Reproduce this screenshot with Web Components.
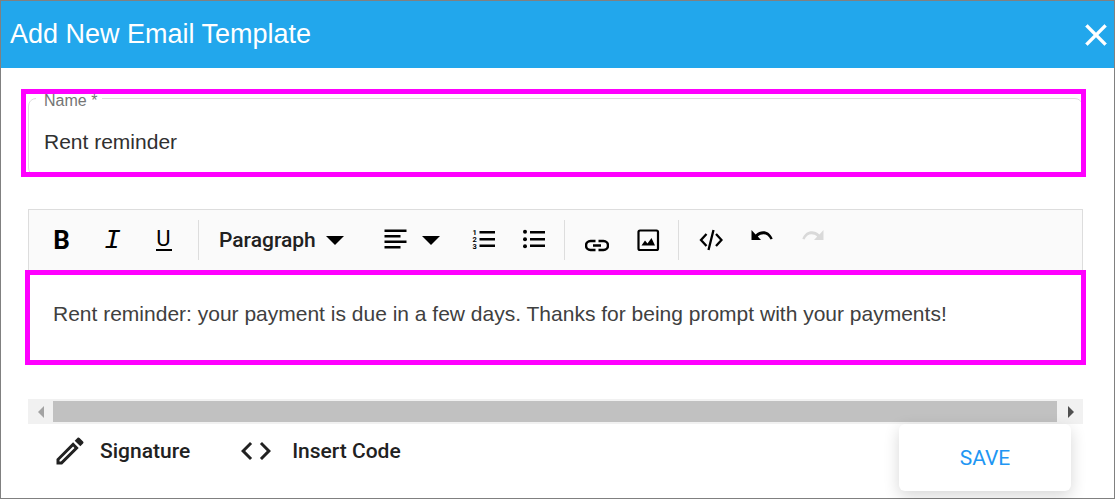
<!DOCTYPE html>
<html lang="en">
<head>
<meta charset="utf-8">
<meta name="viewport" content="width=device-width, initial-scale=1">
<title>Add New Email Template</title>
<style>
    body { margin: 0; font-family: "Liberation Sans", Arial, sans-serif; color: #212121; background: #fff; }
</style>
</head>
<body>
<template-dialog heading="Add New Email Template">
    <highlight-box class="name">
        <outlined-field label="Name *" value="Rent reminder"></outlined-field>
    </highlight-box>
    <editor-toolbar></editor-toolbar>
    <highlight-box class="message">
        <message-editor>Rent reminder: your payment is due in a few days. Thanks for being prompt with your payments!</message-editor>
    </highlight-box>
    <scroll-track></scroll-track>
    <dialog-actions slot="footer"></dialog-actions>
</template-dialog>

<script>
const ICONS = {
    close: '<path stroke="currentColor" stroke-width=".4" d="M19 6.41 17.59 5 12 10.59 6.41 5 5 6.41 10.59 12 5 17.59 6.41 19 12 13.41 17.59 19 19 17.59 13.41 12z"/>',
    alignLeft: '<path d="M.5 1.500h22V4H.5zM.5 7h16v2.500H.5zM.5 12.500h22V15H.5zM.5 18h16v2.500H.5z"/>',
    ordered: '<path d="M8.500 3H24v2.500H8.500zM8.500 10H24v2.500H8.500zM8.500 16.500H24V19H8.500z"/><g font-family="Roboto, sans-serif" font-size="7.500" font-weight="700"><text x="1.500" y="6.500">1</text><text x="1.500" y="13.500">2</text><text x="1.500" y="20.500">3</text></g>',
    bullets: '<path d="M8 3h15v2.500H8zM8 10h15v2.500H8zM8 16.500h15V19H8z"/><circle cx="3" cy="3.800" r="2"/><circle cx="3" cy="11.200" r="2"/><circle cx="3" cy="18.300" r="2"/>',
    link: '<path d="M10.500 13H5.500a4.500 4.500 0 0 0 0 9h5M13.500 13h5a4.500 4.500 0 0 1 0 9h-5M8 17.500h8" fill="none" stroke="currentColor" stroke-width="2.500"/>',
    image: '<rect x="2.500" y="2.500" width="19.500" height="19.500" rx="1.500" fill="none" stroke="currentColor" stroke-width="2.200"/><path d="M5.500 17.500 9 12.500l2.500 3L15.500 10l3.500 7.500z"/>',
    source: '<path d="m7.500 6-5.500 6 5.500 6M17 6l5.500 6-5.500 6M14.500 2l-5 20" fill="none" stroke="currentColor" stroke-width="2.300"/>',
    undo: '<path d="M1.500 2v10h9.500L7.800 8.600C12 4.800 18 5.500 20.500 11.500l2.200-.8C19.500 2.500 11.500 1 5.600 6.500z"/>',
    redo: '<path d="M22.500 2v10H13l3.200-3.400C12 4.800 6 5.500 3.500 11.500l-2.200-.8C4.500 2.500 12.500 1 18.400 6.500z"/>',
    pencil: '<path d="m14.060 9.020.92.92L5.920 19H5v-.92l9.060-9.060M17.660 3c-.25 0-.51.1-.7.290l-1.830 1.830 3.750 3.750 1.830-1.830a1 1 0 0 0 0-1.410l-2.340-2.340A1 1 0 0 0 17.660 3zm-3.600 3.190L3 17.250V21h3.750L17.810 9.940z"/>',
    code: '<path d="M9.400 16.600 4.800 12l4.600-4.600L8 6l-6 6 6 6zm5.200 0 4.600-4.600-4.600-4.600L16 6l6 6-6 6z"/>'
};

const caret = '<svg class="caret" viewBox="0 0 18 9" aria-hidden="true"><path d="M0 0h18L9 9z"/></svg>';

function icon(name) {
    return `<svg class="icon" viewBox="0 0 24 24" aria-hidden="true">${ICONS[name]}</svg>`;
}

const base = `
    * { box-sizing: border-box; }
    svg { display: block; fill: currentColor; flex: none; }
    button { font: inherit; color: inherit; background: none; border: 0; padding: 0; margin: 0; cursor: pointer; }
`;

class TemplateDialog extends HTMLElement {
    constructor() {
        super();
        this.attachShadow({ mode: 'open' });
    }

    connectedCallback() {
        this.shadowRoot.innerHTML = `
            <style>
                ${base}
                :host { display: flex; flex-direction: column; box-sizing: border-box; min-height: 100vh; border: 1px solid #808080; }
                header { display: flex; align-items: center; justify-content: space-between; height: 67px; padding-left: 9px; background: #22a7ec; color: #fff; }
                h1 { margin: 0; padding-bottom: 2px; font-size: 27px; font-weight: 400; line-height: 32px; }
                .icon { width: 36px; height: 36px; }
                main { padding: 21px 31px 0 27px; }
                ::slotted(.name) { margin: 0 -3px 32px -7px; }
                ::slotted(.message) { margin: 0 -3px 34px; }
            </style>
            <header>
                <h1>${this.getAttribute('heading')}</h1>
                <button type="button" aria-label="Close">${icon('close')}</button>
            </header>
            <main><slot></slot></main>
            <slot name="footer"></slot>
        `;
    }
}
customElements.define('template-dialog', TemplateDialog);

class HighlightBox extends HTMLElement {
    constructor() {
        super();
        this.attachShadow({ mode: 'open' });
        this.shadowRoot.innerHTML = `
            <style>
                :host { display: block; overflow: hidden; border: 5px solid #f0f; }
            </style>
            <slot></slot>
        `;
    }
}
customElements.define('highlight-box', HighlightBox);

class OutlinedField extends HTMLElement {
    constructor() {
        super();
        this.attachShadow({ mode: 'open' });
    }

    connectedCallback() {
        this.shadowRoot.innerHTML = `
            <style>
                ${base}
                /* the outline runs past the highlight on the right and bottom */
                :host { display: flow-root; height: 78px; margin: 0 -2px 0 2px; }
                fieldset { margin: -8px 0 0; padding: 0 15px; border: 1px solid #ddd; border-radius: 8px; min-width: 0; height: 90px; }
                legend { margin-left: -8px; padding: 6px 5px 0 8px; font-size: 16px; line-height: 18px; color: #757575; }
                input { display: block; width: 100%; height: 48px; padding: 0; margin-top: 8px; border: 0; outline: 0; background: none; font: inherit; font-size: 21px; color: #303030; }
            </style>
            <fieldset>
                <legend><label for="field">${this.getAttribute('label')}</label></legend>
                <input id="field" type="text" required value="${this.getAttribute('value')}">
            </fieldset>
        `;
    }
}
customElements.define('outlined-field', OutlinedField);

class EditorToolbar extends HTMLElement {
    constructor() {
        super();
        this.attachShadow({ mode: 'open' });
        this.shadowRoot.innerHTML = `
            <style>
                ${base}
                :host { display: flex; align-items: center; box-sizing: border-box; height: 61px; padding-left: 7px; border: 1px solid #ddd; border-bottom: 0; background: #fafafa; color: #000; font-family: Roboto, sans-serif; }
                button { display: flex; align-items: center; justify-content: center; width: 51px; height: 40px; }
                .icon { width: 24px; height: 24px; }
                .caret { width: 18px; height: 9px; }
                .marks { display: flex; padding-right: 4px; }
                .bold { font-size: 26px; font-weight: 700; }
                .italic { font-family: "Liberation Mono", monospace; font-size: 28px; font-style: italic; }
                .underline span { width: 16px; border-bottom: 2px solid; font-size: 22px; line-height: 20px; }
                .sep { width: 1px; height: 40px; margin: 0 6px 0 5px; background: #ddd; }
                .dropdown { display: grid; align-items: center; width: 164px; padding: 0 25px 0 14px; }
                .dropdown > * { grid-area: 1 / 1; }
                .dropdown .caret { justify-self: end; pointer-events: none; }
                select { appearance: none; width: 100%; height: 40px; padding: 0; border: 0; outline: 0; background: none; font: 500 21px Roboto, sans-serif; color: #212121; }
                .align { justify-content: flex-start; width: 88px; padding-left: 15px; gap: 14px; }
                button:disabled { color: #d9d9d9; }
            </style>
            <div class="marks">
                <button type="button" class="bold" aria-label="Bold">B</button>
                <button type="button" class="italic" aria-label="Italic">I</button>
                <button type="button" class="underline" aria-label="Underline"><span>U</span></button>
            </div>
            <span class="sep"></span>
            <div class="dropdown">
                <select aria-label="Block format"><option>Paragraph</option></select>
                ${caret}
            </div>
            <button type="button" class="align" aria-label="Alignment" aria-haspopup="menu">${icon('alignLeft')}${caret}</button>
            <button type="button" aria-label="Numbered list">${icon('ordered')}</button>
            <button type="button" aria-label="Bulleted list">${icon('bullets')}</button>
            <span class="sep"></span>
            <button type="button" aria-label="Insert link">${icon('link')}</button>
            <button type="button" aria-label="Insert image">${icon('image')}</button>
            <span class="sep"></span>
            <button type="button" aria-label="View source">${icon('source')}</button>
            <button type="button" aria-label="Undo">${icon('undo')}</button>
            <button type="button" aria-label="Redo" disabled>${icon('redo')}</button>
        `;
    }
}
customElements.define('editor-toolbar', EditorToolbar);

class MessageEditor extends HTMLElement {
    constructor() {
        super();
        this.attachShadow({ mode: 'open' });
        this.shadowRoot.innerHTML = `
            <style>
                :host { display: block; box-sizing: border-box; min-height: 85px; padding: 27px 23px; font-size: 21px; line-height: 24px; color: #404040; }
                div { outline: 0; }
            </style>
            <div role="textbox" aria-multiline="true" aria-label="Message" contenteditable="true" spellcheck="false"><slot></slot></div>
        `;
    }
}
customElements.define('message-editor', MessageEditor);

class ScrollTrack extends HTMLElement {
    constructor() {
        super();
        this.attachShadow({ mode: 'open' });
        this.shadowRoot.innerHTML = `
            <style>
                ${base}
                :host { display: flex; height: 25px; background: #f1f1f1; }
                button { display: flex; align-items: center; justify-content: center; width: 25px; color: #505050; }
                button:disabled { color: #a3a3a3; }
                button svg { width: 6px; height: 12px; }
                .thumb { flex: 1; margin: 2px 1px 2px 0; background: #c1c1c1; }
            </style>
            <button type="button" aria-label="Scroll left" disabled><svg viewBox="0 0 6 12"><path d="M6 0v12L0 6z"/></svg></button>
            <div class="thumb"></div>
            <button type="button" aria-label="Scroll right"><svg viewBox="0 0 6 12"><path d="M0 0v12l6-6z"/></svg></button>
        `;
    }
}
customElements.define('scroll-track', ScrollTrack);

class DialogActions extends HTMLElement {
    constructor() {
        super();
        this.attachShadow({ mode: 'open' });
        this.shadowRoot.innerHTML = `
            <style>
                ${base}
                :host { display: flex; align-items: flex-start; gap: 48px; padding: 0 43px 7px 51px; font: 500 21px Roboto, sans-serif; }
                button { display: flex; align-items: center; gap: 12px; height: 54px; }
                .icon { width: 36px; height: 36px; }
                .tool:nth-of-type(2) { gap: 18px; }
                .save { justify-content: center; width: 172px; height: 67px; margin-left: auto; border-radius: 6px; background: #fff; box-shadow: 0 5px 16px rgba(0, 0, 0, .16); color: #2196f3; font-weight: 400; }
            </style>
            <button type="button" class="tool">${icon('pencil')}Signature</button>
            <button type="button" class="tool">${icon('code')}Insert Code</button>
            <button type="submit" class="save">SAVE</button>
        `;
    }
}
customElements.define('dialog-actions', DialogActions);
</script>
</body>
</html>
